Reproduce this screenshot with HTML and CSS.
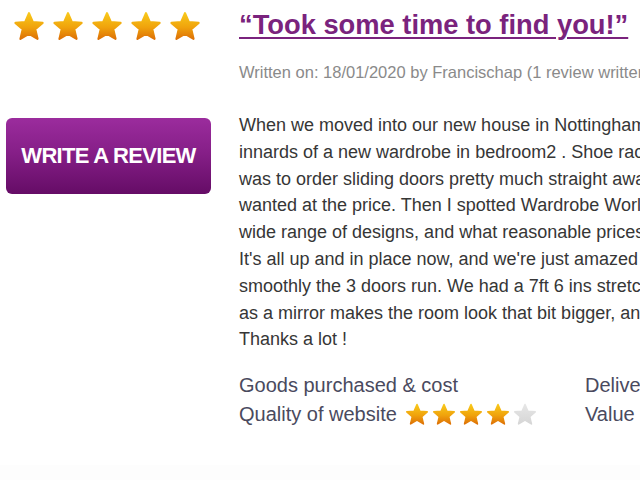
FILE: index.html
```html
<!DOCTYPE html>
<html>
<head>
<meta charset="utf-8">
<link rel="stylesheet" href="styles.css">
</head>
<body>
<svg class="defs" width="0" height="0">
  <defs>
    <linearGradient id="gold" x1="0" y1="0" x2="0" y2="1">
      <stop offset="0" stop-color="#f8c81a"/>
      <stop offset="0.55" stop-color="#f0a30c"/>
      <stop offset="1" stop-color="#de7206"/>
    </linearGradient>
    <linearGradient id="grey" x1="0" y1="0" x2="0" y2="1">
      <stop offset="0" stop-color="#e6e6e6"/>
      <stop offset="1" stop-color="#d6d6d6"/>
    </linearGradient>
    <symbol id="star" viewBox="0 0 24 24">
      <path d="M12 1.6 L14.9 8.3 L22.2 8.9 L16.7 13.7 L18.4 20.9 L12 17.1 L5.6 20.9 L7.3 13.7 L1.8 8.9 L9.1 8.3 Z" stroke-linejoin="round" stroke-width="1.6"/>
    </symbol>
  </defs>
</svg>
<div class="review">
  <aside class="side">
    <div class="stars big">
      <svg class="star gold"><use href="#star"/></svg>
      <svg class="star gold"><use href="#star"/></svg>
      <svg class="star gold"><use href="#star"/></svg>
      <svg class="star gold"><use href="#star"/></svg>
      <svg class="star gold"><use href="#star"/></svg>
    </div>
    <a class="write-btn" href="#">WRITE A REVIEW</a>
  </aside>
  <main class="content">
    <h1 class="title"><a href="#">“Took some time to find you!”</a></h1>
    <p class="meta">Written on: 18/01/2020 by Francischap (1 review written)</p>
    <p class="body">When we moved into our new house in Nottingham we needed the<br>innards of a new wardrobe in bedroom2 . Shoe racks and shelves, so the plan<br>was to order sliding doors pretty much straight away but nothing looked<br>wanted at the price. Then I spotted Wardrobe World online and saw the<br>wide range of designs, and what reasonable prices they were offering.<br>It's all up and in place now, and we're just amazed at how quietly and<br>smoothly the 3 doors run. We had a 7ft 6 ins stretch to fill, and having one<br>as a mirror makes the room look that bit bigger, and brighter too.<br>Thanks a lot !</p>
    <div class="ratings">
      <div class="rating-row">
        <span class="label">Goods purchased &amp; cost</span>
        <span class="label right">Delivery service</span>
      </div>
      <div class="rating-row">
        <span class="label">Quality of website
          <span class="stars small">
            <svg class="star gold"><use href="#star"/></svg>
            <svg class="star gold"><use href="#star"/></svg>
            <svg class="star gold"><use href="#star"/></svg>
            <svg class="star gold"><use href="#star"/></svg>
            <svg class="star grey"><use href="#star"/></svg>
          </span>
        </span>
        <span class="label right">Value for money</span>
      </div>
    </div>
  </main>
</div>
<div class="foot"></div>
</body>
</html>
```
FILE: styles.css
```css
html, body {
  margin: 0;
  padding: 0;
  background: #ffffff;
  width: 640px;
  height: 480px;
  overflow: hidden;
  font-family: "Liberation Sans", Arial, sans-serif;
}
.defs {
  position: absolute;
  width: 0;
  height: 0;
}
.review {
  display: flex;
  width: 900px;
  height: 465px;
}
.side {
  width: 233px;
  flex: none;
  display: flex;
  flex-direction: column;
  padding-left: 6px;
}
.stars {
  display: flex;
}
.stars.big {
  gap: 7px;
  padding: 11px 0 0 7px;
}
.stars.big .star {
  width: 32px;
  height: 32px;
}
.star.gold {
  fill: url(#gold);
  stroke: url(#gold);
}
.star.grey {
  fill: url(#grey);
  stroke: url(#grey);
}
.write-btn {
  margin-top: 75px;
  width: 205px;
  height: 76px;
  border-radius: 6px;
  background: linear-gradient(to bottom, #9b2c9d 0%, #861f88 45%, #650c66 100%);
  color: #ffffff;
  font-weight: bold;
  font-size: 22px;
  letter-spacing: -0.7px;
  text-decoration: none;
  display: flex;
  align-items: center;
  justify-content: center;
}
.content {
  flex: 1;
}
.title {
  margin: 7px 0 0;
  font-size: 27.3px;
  font-weight: bold;
  line-height: 36px;
  white-space: nowrap;
}
.title a {
  color: #7a237d;
  text-decoration: underline;
  text-decoration-thickness: 2px;
  text-underline-offset: 3px;
}
.meta {
  margin: 20px 0 0;
  font-size: 16.5px;
  color: #8a8a8a;
  white-space: nowrap;
}
.body {
  margin: 30px 0 0;
  font-size: 18px;
  line-height: 26.8px;
  color: #363636;
  white-space: nowrap;
}
.ratings {
  margin-top: 18px;
  display: flex;
  flex-direction: column;
}
.rating-row {
  display: flex;
  align-items: center;
  height: 29px;
}
.label {
  font-size: 20px;
  color: #4a4a5e;
  display: flex;
  align-items: center;
  width: 346px;
  flex: none;
}
.label.right {
  width: auto;
}
.stars.small {
  gap: 3px;
  margin-left: 8px;
}
.stars.small .star {
  width: 24px;
  height: 24px;
}
.foot {
  height: 15px;
  background: #fdfdfd;
}
```
